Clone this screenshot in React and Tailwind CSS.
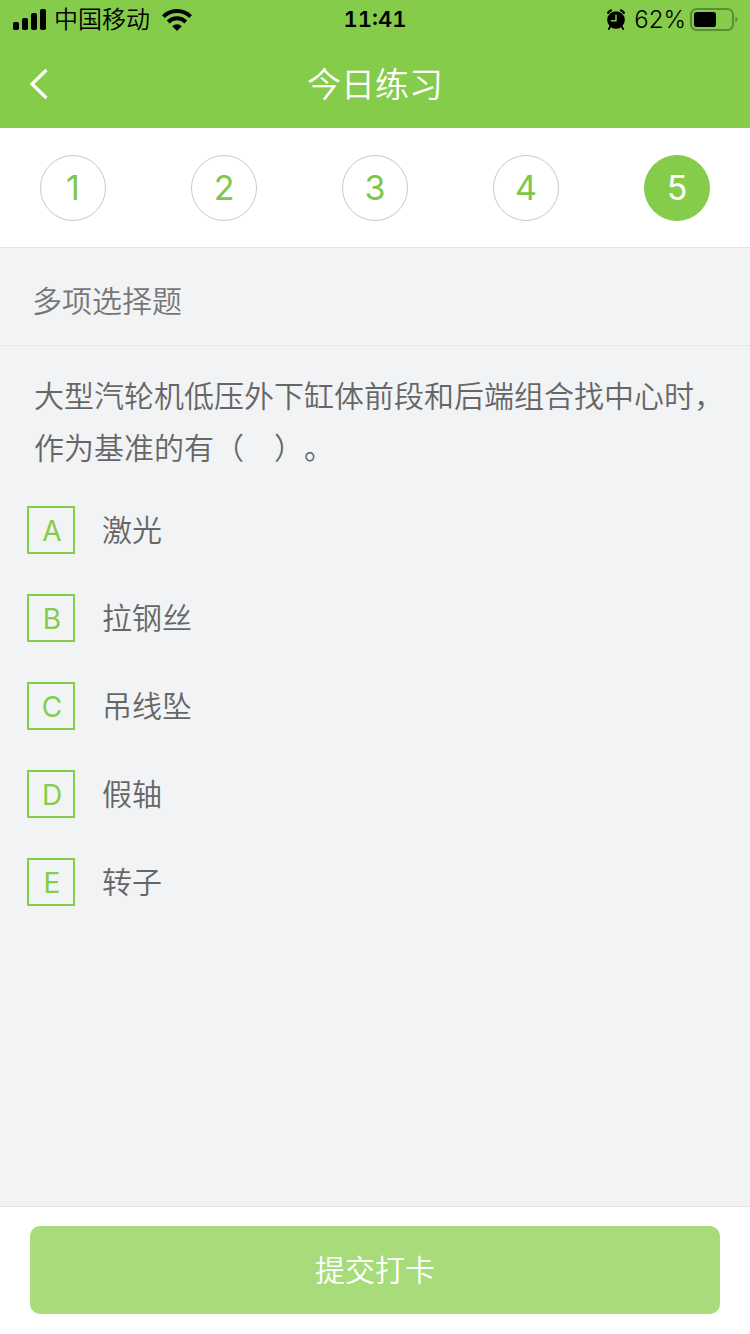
import React, { useState } from 'react';

const steps = [1, 2, 3, 4, 5];

const options = [
  { key: 'A', text: '激光' },
  { key: 'B', text: '拉钢丝' },
  { key: 'C', text: '吊线坠' },
  { key: 'D', text: '假轴' },
  { key: 'E', text: '转子' }
];

function SignalIcon() {
  return (
    <svg width="34" height="22" viewBox="0 0 34 22" fill="black" aria-hidden="true">
      <rect x="1" y="13" width="6" height="8" rx="1.8" />
      <rect x="10" y="9" width="6" height="12" rx="1.8" />
      <rect x="19" y="4" width="6" height="17" rx="1.8" />
      <rect x="28" y="0" width="6" height="21" rx="1.8" />
    </svg>
  );
}

function WifiIcon() {
  return (
    <svg width="30" height="22" viewBox="0 0 30 22" aria-hidden="true">
      <g fill="none" stroke="black" strokeWidth="4">
        <path d="M1.4 7.6 A19.3 19.3 0 0 1 28.6 7.6" />
        <path d="M6.2 13 A12.4 12.4 0 0 1 23.8 13" />
      </g>
      <path d="M15 22 L10.2 17.2 A7.2 7.2 0 0 1 19.8 17.2 Z" fill="black" />
    </svg>
  );
}

function AlarmIcon() {
  return (
    <svg width="20" height="22" viewBox="0 0 20 22" aria-hidden="true">
      <circle cx="10" cy="11" r="8.8" fill="black" />
      <g fill="none" stroke="black" strokeWidth="2.4" strokeLinecap="round">
        <path d="M2.2 3.8 Q3 2.2 5 1.4" />
        <path d="M17.8 3.8 Q17 2.2 15 1.4" />
        <path d="M4.2 17.8 L2.8 20" strokeWidth="1.8" />
        <path d="M15.8 17.8 L17.2 20" strokeWidth="1.8" />
      </g>
      <path d="M10 5.4 V11.8 H4.8" fill="none" stroke="#85cc4b" strokeWidth="1.4" />
    </svg>
  );
}

function BatteryIcon() {
  return (
    <svg width="48" height="24" viewBox="0 0 48 24" aria-hidden="true">
      <rect x="1" y="1" width="42" height="21" rx="5.5" fill="none" stroke="#5a8e32" strokeWidth="2" />
      <rect x="4" y="4" width="22" height="15" rx="2.8" fill="black" />
      <path d="M45.4 8.4 Q47.6 9.4 47.6 11.5 Q47.6 13.6 45.4 14.6 Z" fill="#5a8e32" />
    </svg>
  );
}

export default function App() {
  const [current, setCurrent] = useState(5);
  const [answers, setAnswers] = useState([]);

  const toggle = (key) => {
    setAnswers(answers.includes(key) ? answers.filter((k) => k !== key) : [...answers, key]);
  };

  return (
    <div className="min-h-screen flex flex-col bg-[#f2f3f5] text-[#666666] font-['Inter','Noto_Sans_CJK_SC',sans-serif] font-[350] [text-spacing-trim:space-all]">
      <header className="bg-[#85cc4b]">
        <div className="h-10 grid grid-cols-3 items-center px-3 text-black text-2xl">
          <div className="flex items-center gap-2">
            <SignalIcon />
            <span className="pr-1">中国移动</span>
            <WifiIcon />
          </div>
          <div className="text-center text-[22px] font-semibold tabular-nums">11:41</div>
          <div className="flex items-center justify-end gap-1">
            <AlarmIcon />
            <span className="pl-1">62%</span>
            <BatteryIcon />
          </div>
        </div>
        <div className="h-[88px] grid grid-cols-[80px_1fr_80px] items-center">
          <button type="button" aria-label="返回" className="h-full pl-7">
            <svg width="22" height="32" viewBox="0 0 22 32" fill="none" stroke="white" strokeWidth="3.2">
              <path d="M18.4 2 L4 16 L18.4 30" />
            </svg>
          </button>
          <h1 className="text-center text-white text-[34px]">今日练习</h1>
        </div>
      </header>

      <nav className="h-[120px] flex items-center justify-between px-10 bg-white border-b border-[#e4e4e6]">
        {steps.map((n) => (
          <button
            key={n}
            type="button"
            onClick={() => setCurrent(n)}
            className={`size-[66px] rounded-full border text-[34px] font-normal ${n === current ? 'bg-[#85cc4b] border-[#85cc4b] text-white' : 'bg-white border-[#c8c8c8] text-[#7fc74a]'}`}
          >
            {n}
          </button>
        ))}
      </nav>

      <main className="flex-1">
        <h2 className="h-[98px] flex items-center pt-2.5 px-8 border-b border-[#e6e7e9] text-[30px] text-[#777777]">多项选择题</h2>
        <p className="pt-6 pl-[34px] pr-6 text-[30px] leading-[52px]">
          大型汽轮机低压外下缸体前段和后端组合找中心时，作为基准的有（　）。
        </p>
        <div className="flex flex-col gap-10 pt-8 px-[27px]">
          {options.map((o) => (
            <label key={o.key} className="flex items-center gap-[27px] text-[30px] leading-[48px] cursor-pointer">
              <input type="checkbox" checked={answers.includes(o.key)} onChange={() => toggle(o.key)} className="peer sr-only" />
              <span className="size-12 flex items-center justify-center pt-0.5 pl-0.5 border-2 border-[#85cc4b] text-[28px] font-normal text-[#85cc4b] peer-checked:bg-[#85cc4b] peer-checked:text-white">
                {o.key}
              </span>
              <span>{o.text}</span>
            </label>
          ))}
        </div>
      </main>

      <footer className="px-[30px] pt-[19px] pb-5 bg-white border-t border-[#e4e4e6]">
        <button type="button" className="w-full h-[88px] rounded-[10px] bg-[#a8dc7a] text-white text-[30px]">
          提交打卡
        </button>
      </footer>
    </div>
  );
}
